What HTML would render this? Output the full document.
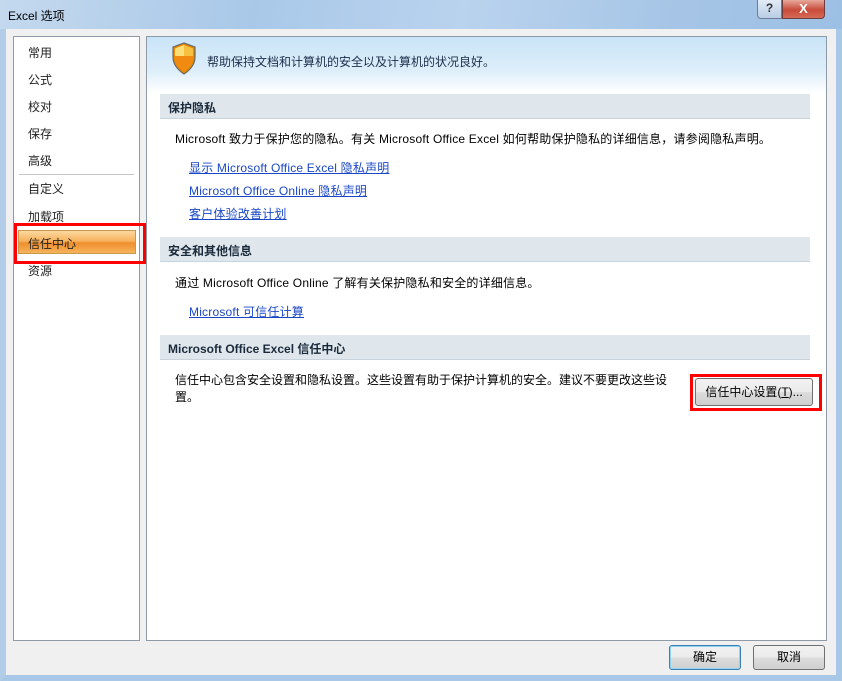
<!DOCTYPE html>
<html><head><meta charset="utf-8"><style>
*{margin:0;padding:0;box-sizing:border-box}
body{width:842px;height:681px;overflow:hidden;font-family:"Liberation Sans","Noto Sans CJK SC",sans-serif;font-size:12px;background:#f0f0f0;position:relative}
.abs{position:absolute}
.title{left:0;top:0;width:842px;height:30px;background:linear-gradient(100deg,#c4d9ee 0%,#a9c8e8 30%,#b9d3ee 55%,#a6c5e6 80%,#9cc0e4 100%);border-bottom:1px solid #8aa6c4}
.frame{left:0;top:29px;width:842px;height:652px;border-left:6px solid #b3cde8;border-right:6px solid #a9c7e6;border-bottom:6px solid #a9c7e6;background:#f0f0f0}
.nav{left:13px;top:36px;width:127px;height:605px;background:#fff;border:1px solid #8e9aa8}
.main{left:146px;top:36px;width:681px;height:605px;background:#fff;border:1px solid #8e9aa8}
.hdr{left:147px;top:37px;width:679px;height:56px;background:linear-gradient(180deg,#c9e4f7 0%,#ddeefa 60%,#fff 100%)}
.nv{left:28px;color:#1e1e1e}
.sec{left:160px;width:650px;height:25px;background:#dfe7ed;border-bottom:1px solid #c9d3db;font-weight:bold;color:#1b2a3a;padding:5px 0 0 8px}
.t{color:#000}
.lnk{left:189px;text-decoration:underline;color:#1a47c7;letter-spacing:0.2px}
.btn{border:1px solid #707070;border-radius:3px;background:linear-gradient(#f2f2f2 0%,#ebebeb 50%,#dddddd 51%,#cfcfcf 100%);text-align:center}
</style></head><body>
<div class="abs title"></div>
<div class="abs" style="left:8px;top:7px;color:#000">Excel 选项</div>
<div class="abs" style="left:757px;top:0;width:25px;height:19px;border:1px solid #6d7f96;border-top:none;border-radius:0 0 0 4px;background:linear-gradient(#e2ecf7,#b8cde4);text-align:center;font-weight:bold;color:#333;font-size:12px;line-height:17px">?</div>
<div class="abs" style="left:782px;top:0;width:43px;height:19px;border:1px solid #6d3c3c;border-top:none;border-radius:0 0 4px 0;background:linear-gradient(#e8a89c,#c84b3a 55%,#d76b55);text-align:center;font-weight:bold;color:#fff;font-size:13px;line-height:17px">X</div>
<div class="abs frame"></div>
<div class="abs nav"></div>
<div class="abs main"></div>
<div class="abs hdr"></div>
<svg class="abs" style="left:171px;top:42px" width="26" height="33" viewBox="0 0 26 33"><path d="M13 1 L24 5 V15 C24 23 19 28 13 32 C7 28 2 23 2 15 V5 Z" fill="#e88a00" stroke="#6a6a6a" stroke-width="1.2"/><path d="M13 3 L22 6.5 V14 H13 Z" fill="#f7c040"/><path d="M13 14 H4 V6.5 L13 3Z" fill="#fbe07a"/><path d="M4 14 H22 C22 22 18 26 13 30 C8 26 4 22 4 14Z" fill="#f08a10"/></svg>
<div class="abs" style="left:207px;top:53px;color:#1e2e4a">帮助保持文档和计算机的安全以及计算机的状况良好。</div>

<div class="abs nv" style="top:44px">常用</div>
<div class="abs nv" style="top:71px">公式</div>
<div class="abs nv" style="top:98px">校对</div>
<div class="abs nv" style="top:125px">保存</div>
<div class="abs nv" style="top:152px">高级</div>
<div class="abs" style="left:19px;top:174px;width:115px;height:1px;background:#c5c5c5"></div>
<div class="abs nv" style="top:180px">自定义</div>
<div class="abs nv" style="top:208px">加载项</div>
<div class="abs" style="left:18px;top:230px;width:118px;height:24px;border:1px solid #c59a4a;background:linear-gradient(#fbd9a0 0%,#f7b25e 45%,#ef8f2c 55%,#f6b35c 100%)"></div>
<div class="abs nv" style="top:235px">信任中心</div>
<div class="abs" style="left:14px;top:223px;width:132px;height:41px;border:3px solid #f00"></div>
<div class="abs nv" style="top:262px">资源</div>

<div class="abs sec" style="top:94px">保护隐私</div>
<div class="abs t" style="left:175px;top:130px;letter-spacing:0.2px">Microsoft 致力于保护您的隐私。有关 Microsoft Office Excel 如何帮助保护隐私的详细信息，请参阅隐私声明。</div>
<div class="abs lnk" style="top:159px">显示 Microsoft Office Excel 隐私声明</div>
<div class="abs lnk" style="top:182px">Microsoft Office Online 隐私声明</div>
<div class="abs lnk" style="top:205px">客户体验改善计划</div>

<div class="abs sec" style="top:237px">安全和其他信息</div>
<div class="abs t" style="left:175px;top:274px;letter-spacing:0.2px">通过 Microsoft Office Online 了解有关保护隐私和安全的详细信息。</div>
<div class="abs lnk" style="top:303px">Microsoft 可信任计算</div>

<div class="abs sec" style="top:335px">Microsoft Office Excel 信任中心</div>
<div class="abs t" style="left:175px;top:372px;width:510px;line-height:17px">信任中心包含安全设置和隐私设置。这些设置有助于保护计算机的安全。建议不要更改这些设置。</div>
<div class="abs btn" style="left:695px;top:378px;width:118px;height:28px;line-height:26px">信任中心设置(<u>T</u>)...</div>
<div class="abs" style="left:690px;top:374px;width:132px;height:37px;border:3px solid #f00"></div>

<div class="abs btn" style="left:669px;top:645px;width:72px;height:25px;line-height:23px;border-color:#3c7fb1;box-shadow:inset 0 0 0 1px #8fd3f5">确定</div>
<div class="abs btn" style="left:753px;top:645px;width:72px;height:25px;line-height:23px">取消</div>
</body></html>
